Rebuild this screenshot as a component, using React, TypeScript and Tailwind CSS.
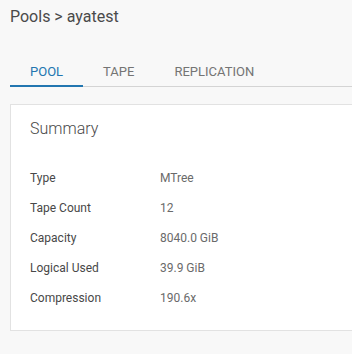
const ROWS = [
  { label: 'Type', value: 'MTree' },
  { label: 'Tape Count', value: '12' },
  { label: 'Capacity', value: '8040.0 GiB' },
  { label: 'Logical Used', value: '39.9 GiB' },
  { label: 'Compression', value: '190.6x' },
]

const TABS = ['POOL', 'TAPE', 'REPLICATION']

export default function App() {
  return (
    <div className="w-[352px] h-[354px] overflow-hidden bg-[#f8f8f8] font-['Roboto',sans-serif]">
      {/* Breadcrumb */}
      <div className="px-[10px] pt-[6px]">
        <h1 className="text-[16px] leading-[22px] text-[#4a4a4a]">Pools &gt; ayatest</h1>
      </div>

      {/* Tabs */}
      <div className="ml-[10px] mt-[34px] flex border-b border-[#d4d4d4]">
        {TABS.map((t, i) => (
          <button
            key={t}
            className={`-mb-px px-[20px] pb-[3px] text-[13px] leading-[20px] border-b-2 ${
              i === 0 ? 'border-[#2276b0] text-[#2276b0]' : 'border-transparent text-[#747474]'
            }`}
          >
            {t}
          </button>
        ))}
      </div>

      {/* Summary card */}
      <div className="ml-[10px] -mr-[20px] mt-[17px] bg-white border border-[#e2e2e2] pt-[12px] pb-[17px] px-[19px]">
        <h2 className="text-[16px] leading-[24px] font-light text-[#4a4a4a]">Summary</h2>
        <div className="mt-[22px]">
          {ROWS.map(r => (
            <div key={r.label} className="flex h-[30px] items-center text-[12px]">
              <span className="w-[130px] text-[#484848]">{r.label}</span>
              <span className="text-[#6a6a6a]">{r.value}</span>
            </div>
          ))}
        </div>
      </div>
    </div>
  )
}
